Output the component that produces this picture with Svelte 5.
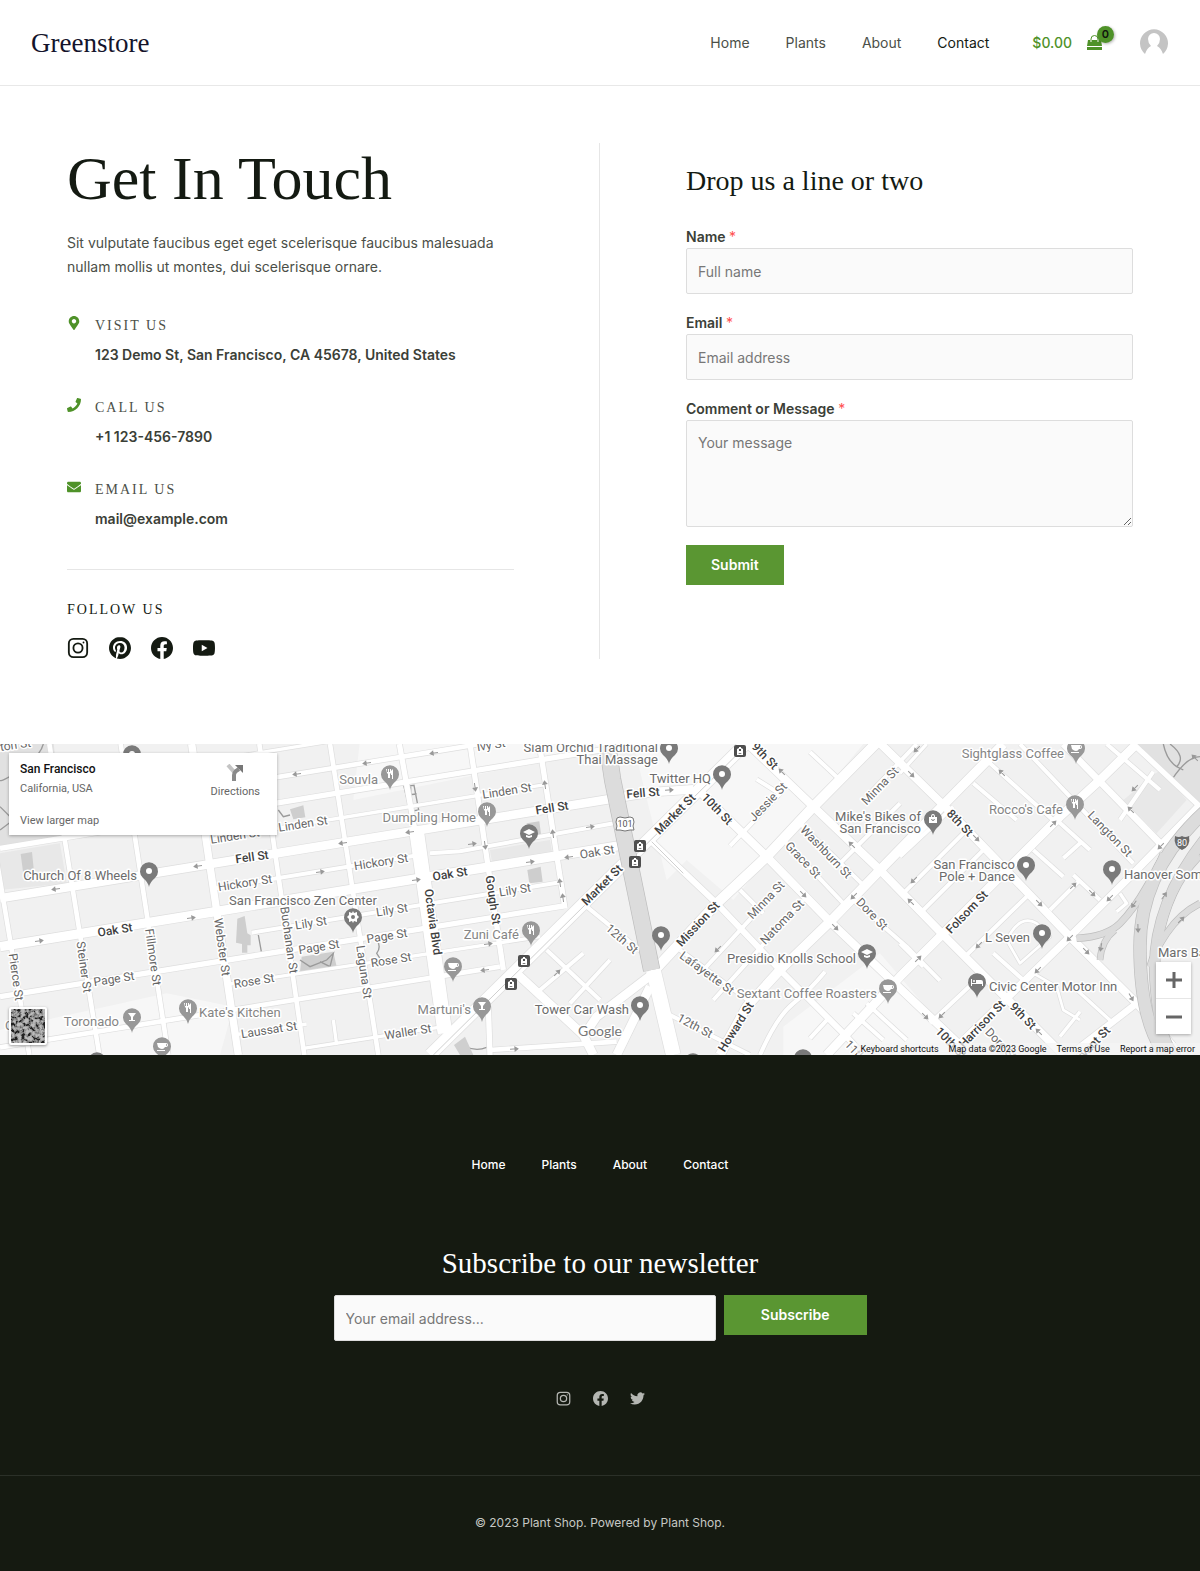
<script>
    const links = ['Home', 'Plants', 'About', 'Contact'];

    const icons = {
        facebook: 'M24 12.073c0-6.627-5.373-12-12-12s-12 5.373-12 12c0 5.99 4.388 10.954 10.125 11.854v-8.385H7.078v-3.47h3.047V9.43c0-3.007 1.792-4.669 4.533-4.669 1.312 0 2.686.235 2.686.235v2.953H15.83c-1.491 0-1.956.925-1.956 1.874v2.25h3.328l-.532 3.47h-2.796v8.385C19.612 23.027 24 18.062 24 12.073z',
        pinterest: 'M12.017 0C5.396 0 .029 5.367.029 11.987c0 5.079 3.158 9.417 7.618 11.162-.105-.949-.199-2.403.041-3.439.219-.937 1.406-5.957 1.406-5.957s-.359-.72-.359-1.781c0-1.663.967-2.911 2.168-2.911 1.024 0 1.518.769 1.518 1.688 0 1.029-.653 2.567-.992 3.992-.285 1.193.6 2.165 1.775 2.165 2.128 0 3.768-2.245 3.768-5.487 0-2.861-2.063-4.869-5.008-4.869-3.41 0-5.409 2.562-5.409 5.199 0 1.033.394 2.143.889 2.741.099.12.112.225.085.345-.09.375-.293 1.199-.334 1.363-.053.225-.172.271-.401.165-1.495-.69-2.433-2.878-2.433-4.646 0-3.776 2.748-7.252 7.92-7.252 4.158 0 7.392 2.967 7.392 6.923 0 4.135-2.607 7.462-6.233 7.462-1.214 0-2.354-.629-2.758-1.379l-.749 2.848c-.269 1.045-1.004 2.352-1.498 3.146 1.123.345 2.306.535 3.55.535 6.607 0 11.985-5.365 11.985-11.987C23.97 5.39 18.592.026 11.985.026L12.017 0z',
        youtube: 'M23.498 6.186a3.016 3.016 0 0 0-2.122-2.136C19.505 3.545 12 3.545 12 3.545s-7.505 0-9.377.505A3.017 3.017 0 0 0 .502 6.186C0 8.07 0 12 0 12s0 3.93.502 5.814a3.016 3.016 0 0 0 2.122 2.136c1.871.505 9.376.505 9.376.505s7.505 0 9.377-.505a3.015 3.015 0 0 0 2.122-2.136C24 15.93 24 12 24 12s0-3.93-.502-5.814zM9.545 15.568V8.432L15.818 12l-6.273 3.568z',
        twitter: 'M23.953 4.57a10 10 0 01-2.825.775 4.958 4.958 0 002.163-2.723c-.951.555-2.005.959-3.127 1.184a4.92 4.92 0 00-8.384 4.482C7.69 8.095 4.067 6.13 1.64 3.162a4.822 4.822 0 00-.666 2.475c0 1.71.87 3.213 2.188 4.096a4.904 4.904 0 01-2.228-.616v.06a4.923 4.923 0 003.946 4.827 4.996 4.996 0 01-2.212.085 4.936 4.936 0 004.604 3.417 9.867 9.867 0 01-6.102 2.105c-.39 0-.779-.023-1.17-.067a13.995 13.995 0 007.557 2.209c9.053 0 13.998-7.496 13.998-13.985 0-.21 0-.42-.015-.63A9.935 9.935 0 0024 4.59z',
    };

    const contacts = [
        {
            title: 'VISIT US',
            text: '123 Demo St, San Francisco, CA 45678, United States',
            box: '-64 0 512 512',
            path: 'M172.268 501.67C26.97 291.031 0 269.413 0 192 0 85.961 85.961 0 192 0s192 85.961 192 192c0 77.413-26.97 99.031-172.268 309.67-9.535 13.774-29.93 13.773-39.464 0zM192 272c44.183 0 80-35.817 80-80s-35.817-80-80-80-80 35.817-80 80 35.817 80 80 80z',
        },
        {
            title: 'CALL US',
            text: '+1 123-456-7890',
            box: '0 0 512 512',
            path: 'M493.4 24.6l-104-24c-11.3-2.6-22.9 3.3-27.5 13.9l-48 112c-4.2 9.8-1.4 21.3 6.9 28l60.6 49.6c-36 76.7-98.9 140.5-177.2 177.2l-49.6-60.6c-6.8-8.3-18.2-11.1-28-6.9l-112 48C3.9 366.5-2 378.1.6 389.4l24 104C27.1 504.2 36.7 512 48 512c256.1 0 464-207.5 464-464 0-11.2-7.7-20.9-18.6-23.4z',
        },
        {
            title: 'EMAIL US',
            text: 'mail@example.com',
            box: '0 0 512 512',
            path: 'M502.3 190.8c3.9-3.1 9.7-.2 9.7 4.7V400c0 26.5-21.5 48-48 48H48c-26.5 0-48-21.5-48-48V195.6c0-5 5.7-7.8 9.7-4.7 22.4 17.4 52.1 39.5 154.1 113.6 21.1 15.4 56.7 47.8 92.2 47.6 35.7.3 72-32.8 92.3-47.6 102-74.1 131.6-96.3 154-113.7zM256 320c23.2.4 56.6-29.2 73.4-41.4 132.7-96.3 142.8-104.7 173.4-128.7 5.8-4.5 9.2-11.5 9.2-18.9v-19c0-26.5-21.5-48-48-48H48c-26.5 0-48 21.5-48 48v19c0 7.4 3.4 14.3 9.2 18.9 30.6 23.9 40.7 32.4 173.4 128.7 16.8 12.2 50.2 41.8 73.4 41.4z',
        },
    ];

    // Roads: [width, path], on a grid three times finer than the labels
    const roads = [
        // alleys
        [10, 'M500 84L1000 2'],
        [10, 'M640 296L1640 133'],
        [12, 'M640 446L1240 348M1290 340L1380 334L1850 248'],
        [12, 'M755 578L1680 427'],
        [10, 'M690 732L1620 590'],
        [10, 'M700 885L920 852M910 925L1330 860M1000 840L1010 915'],
        [12, 'M1640 630L1800 780M1620 750L1750 640M1710 790L1830 660M1760 500L1925 635'],
        [12, 'M2000 820L2250 945M2040 630L2250 785'],
        [12, 'M2190 318L2350 150M2270 118L2345 165M2430 36L2520 120'],
        [12, 'M2110 690L2350 430M2140 780L2410 480M2220 450L2290 520'],
        [12, 'M2350 300L2530 490M2400 250L2600 445M2560 480L2720 620L2820 722'],
        [12, 'M2520 370L2560 330L2700 190M2600 170L2750 12'],
        [12, 'M2280 945Q2330 830 2380 790T2475 695M2430 895L2490 830'],
        [12, 'M2560 820L2650 900M2600 790L2720 900'],
        [12, 'M2770 510L2960 320M2715 455L2910 260M2700 350L2860 200'],
        [12, 'M2900 645L3090 460M2790 850L2950 700'],
        [12, 'M2920 130L3050 240M2970 70L3170 250M3060 12L3400 370'],
        [12, 'M3150 510L3240 420M3220 405L3300 480M3100 330L3190 410M3170 240L3270 330M3240 310L3190 355'],
        [12, 'M2980 640L3070 720M3360 240L3460 95M3320 12L3480 150M2700 610L2770 680'],
        [8, 'M3020 600Q3060 520 3110 550L3150 590L3060 670ZM3100 700L3170 740L3190 810L3240 840'],
        [10, 'M3180 890L3240 815M3220 740L3340 850M2700 100L2780 12M3360 460L3380 490L3350 515'],
        // west side
        [14, 'M500 165L1000 84L1300 35L1440 12M0 922L1500 680'],
        [16, 'M0 325L1900 14'],
        [16, 'M0 770L1690 498'],
        [14, 'M-20 300L88 945M148 12L298 945M362 12L505 945'],
        [22, 'M575 12L715 945'],
        [14, 'M778 12L913 945M990 12L1135 945'],
        [16, 'M1198 12L1250 300M1410 12L1510 690M1465 800L1470 945M1618 12L1695 505'],
        [14, 'M1470 930L1850 905'],
        [26, 'M0 475L1960 156L2080 148'],
        [28, 'M0 620L1870 315'],
        [44, 'M1250 275L1335 880'],
        [36, 'M1290 945L2240 8'],
        // south of Market
        [18, 'M1950 300L2150 490L2340 690L2540 890L2590 945'],
        [26, 'M1550 700L1750 885L1780 945M1960 700L1790 830L1750 890M1950 740L1850 945'],
        [44, 'M1960 690L2020 945'],
        [30, 'M1955 700L2150 490L2300 350L2440 200L2630 8'],
        [28, 'M2160 945L2240 800L2340 690L2490 545L2640 390L2830 195L3010 12'],
        [26, 'M2480 945L2700 710L2830 580L3010 400L3180 230L3300 120L3410 12'],
        [22, 'M2860 930L3020 775L3210 590L3400 400L3600 195'],
        [20, 'M3210 945L3410 790'],
        [24, 'M2240 8L2440 200L2640 390L2830 585L3020 775L3190 945'],
        [24, 'M2090 145L2300 350L2490 545L2700 745L2890 925'],
        [24, 'M2630 0L2830 195L3210 590L3420 800L3540 945'],
        [20, 'M3190 12L3490 320'],
        [16, 'M3400 12L3600 200'],
    ];

    const freeways = [
        [48, 'M1822 12L1838 120L1955 690'],
        [18, 'M3230 595Q3320 590 3360 550T3440 440T3490 340'],
        [16, 'M3300 660Q3305 600 3345 570'],
        [18, 'M3600 490Q3540 520 3500 580T3450 680'],
        [36, 'M3620 210Q3420 390 3420 620T3500 950'],
        [30, 'M3620 290Q3450 500 3465 720T3540 950'],
        [14, 'M3600 350Q3510 440 3480 600'],
    ];

    // x, y, angle, name, major
    const streets = [
        [14, 1, -8, 'lton St'],
        [235, 92, -9, 'Linden St'],
        [303, 80, -9, 'Linden St'],
        [252, 113, -8, 'Fell St', true],
        [245, 139, -9, 'Hickory St'],
        [115, 186, -9, 'Oak St', true],
        [114, 235, -9, 'Page St'],
        [254, 237, -9, 'Rose St'],
        [269, 286, -9, 'Laussat St'],
        [16, 233, 82, 'Pierce St'],
        [84, 223, 82, 'Steiner St'],
        [153, 213, 82, 'Fillmore St'],
        [222, 203, 82, 'Webster St'],
        [289, 196, 82, 'Buchanan St'],
        [364, 228, 82, 'Laguna St'],
        [433, 178, 82, 'Octavia Blvd', true],
        [493, 156, 82, 'Gough St', true],
        [491, 1, -9, 'Ivy St'],
        [507, 47, -9, 'Linden St'],
        [552, 64, -9, 'Fell St', true],
        [381, 118, -9, 'Hickory St'],
        [450, 130, -9, 'Oak St', true],
        [515, 146, -9, 'Lily St'],
        [392, 166, -9, 'Lily St'],
        [311, 179, -9, 'Lily St'],
        [319, 203, -9, 'Page St'],
        [387, 192, -9, 'Page St'],
        [391, 216, -9, 'Rose St'],
        [408, 288, -9, 'Waller St'],
        [597, 108, -9, 'Oak St'],
        [643, 49, -5, 'Fell St', true],
        [675, 70, -45, 'Market St', true],
        [602, 141, -45, 'Market St', true],
        [765, 12, 46, '9th St', true],
        [717, 65, 46, '10th St', true],
        [768, 58, -46, 'Jessie St'],
        [826, 108, 46, 'Washburn St'],
        [803, 116, 46, 'Grace St'],
        [880, 42, -46, 'Minna St'],
        [766, 156, -46, 'Minna St'],
        [782, 178, -46, 'Natoma St'],
        [872, 170, 46, 'Dore St'],
        [698, 180, -47, 'Mission St', true],
        [622, 195, 41, '12th St'],
        [707, 229, 36, 'Lafayette St'],
        [695, 282, 28, '12th St'],
        [736, 283, -58, 'Howard St', true],
        [860, 312, 46, '11th St'],
        [960, 79, 46, '8th St', true],
        [967, 168, -46, 'Folsom St', true],
        [1110, 90, 46, 'Langton St'],
        [982, 280, -46, 'Harrison St', true],
        [1023, 272, 46, '9th St', true],
        [951, 299, 46, '10th St', true],
        [1001, 300, 46, 'Dore St'],
        [1091, 302, -46, 'Bryant St', true],
    ];

    // x, y, anchor, lines, light
    const places = [
        [137, 131, 'end', ['Church Of 8 Wheels']],
        [119, 277, 'end', ['Toronado'], true],
        [199, 268, 'start', ["Kate's Kitchen"], true],
        [303, 156, 'middle', ['San Francisco Zen Center']],
        [378, 35, 'end', ['Souvla'], true],
        [476, 73, 'end', ['Dumpling Home'], true],
        [519, 190, 'end', ['Zuni Café'], true],
        [471, 265, 'end', ["Martuni's"], true],
        [658, 3, 'end', ['Siam Orchid Traditional', 'Thai Massage']],
        [711, 34, 'end', ['Twitter HQ']],
        [629, 265, 'end', ['Tower Car Wash']],
        [921, 72, 'end', ["Mike's Bikes of", 'San Francisco']],
        [1064, 9, 'end', ['Sightglass Coffee'], true],
        [1063, 65, 'end', ["Rocco's Cafe"], true],
        [1015, 120, 'end', ['San Francisco', 'Pole + Dance']],
        [1124, 130, 'start', ['Hanover Soma']],
        [1030, 193, 'end', ['L Seven']],
        [989, 242, 'start', ['Civic Center Motor Inn']],
        [856, 214, 'end', ['Presidio Knolls School']],
        [877, 249, 'end', ['Sextant Coffee Roasters'], true],
        [1158, 208, 'start', ['Mars Bar']],
        [5, 281, 'start', ['Cafe'], true],
    ];

    const pins = [
        [149, 127, 'dot'], [132, 10, 'dot'], [132, 273, 'drink'], [188, 264, 'food'],
        [162, 302, 'cup'], [97, 317, 'dot'], [353, 173, 'flower'], [390, 30, 'food'],
        [487, 67, 'food'], [529, 89, 'school'], [531, 186, 'food'], [453, 222, 'cup'],
        [482, 262, 'drink'], [669, 4, 'dot'], [722, 30, 'dot'], [661, 191, 'dot'],
        [640, 261, 'dot'], [933, 75, 'bag'], [1076, 4, 'cup'], [1075, 60, 'food'],
        [1026, 121, 'dot'], [1112, 125, 'dot'], [1042, 189, 'dot'], [977, 238, 'bed'],
        [867, 209, 'school'], [888, 244, 'cup'], [803, 314, 'dot'], [693, 318, 'dot'],
    ];

    const glyphs = {
        dot: 'M-3 0a3 3 0 1 0 6 0a3 3 0 1 0-6 0z',
        drink: 'M-4-4h8l-3 4v3h2v1h-6v-1h2v-3z',
        food: 'M-4-5h1v3h1v-3h1v3h1v-3h1v4l-1 1v4h-2v-4l-1-1zM3-5v10h-1v-4h-1v-4z',
        cup: 'M-5-3h9q2 0 2 2t-3 2q-1 2-3 2t-4-2zM-5 4h8v1h-8zM4-2v2q1 0 1-1t-1-1z',
        flower: 'M0-6l1 2 3-1 0 3 2 2-2 2 0 3-3-1-1 2-1-2-3 1 0-3-2-2 2-2 0-3 3 1zM-2 0a2 2 0 1 0 4 0a2 2 0 1 0-4 0z',
        school: 'M0-4l6 3-6 3-6-3zM-3 2l3 1 3-1v2l-3 1-3-1z',
        bag: 'M-4-2h2q0-3 2-3t2 3h2v6h-8zM-1-2h2q0-2-1-2t-1 2zM-2 0h1q1 2 2 0h1q-2 4-4 0z',
        bed: 'M-6-3h1v4h4v-3h5q2 0 2 2v4h-1v-2h-10v2h-1zM-4-1a1 1 0 1 0 2 0a1 1 0 1 0-2 0z',
    };

    // One way arrows: x, y, angle
    const arrows = [
        [56, 145, 172], [198, 122, 172], [191, 174, -8], [39, 197, -8], [297, 30, 172],
        [367, 19, 172], [434, 9, 172], [343, 99, 172], [410, 88, 172], [320, 128, -8],
        [416, 136, -8], [472, 100, -8], [475, 43, 82], [485, 101, 82], [545, 41, -98],
        [553, 90, -98], [560, 139, -98], [563, 154, -98], [590, 83, -8], [530, 118, -8],
        [569, 113, 172], [488, 200, -8], [485, 226, 172], [514, 305, -4], [557, 229, -45],
        [669, 46, -4], [782, 28, -135], [852, 101, -135], [803, 150, 45], [854, 152, 135],
        [835, 183, 45], [718, 205, 135], [917, 5, 135], [911, 30, 45], [1002, 29, -135],
        [976, 94, 45], [1053, 80, -45], [914, 136, 135], [911, 158, -135], [1039, 159, 45],
        [1073, 142, -45], [1092, 149, 45], [1110, 154, 135], [1070, 194, 135], [1086, 207, 45],
        [979, 201, 135], [1038, 226, 135], [918, 215, -45], [925, 272, 45], [942, 271, 135],
        [1039, 288, -135], [1131, 253, 60], [1135, 44, 135], [1131, 66, -135], [1161, 102, 135],
        [1195, 14, -135], [1134, 160, 125], [1138, 184, 88], [1164, 152, -55], [1181, 176, -45],
        [1101, 203, 100],
    ];

    const stations = [[524, 217], [511, 240], [740, 7], [640, 102], [635, 118]];
</script>

{#snippet social(name)}
    <a href="#{name}" aria-label={name}>
        <svg viewBox="0 0 24 24" aria-hidden="true">
            {#if name === 'instagram'}
                <rect x="2" y="2" width="20" height="20" rx="5" fill="none" stroke="currentColor" stroke-width="2" />
                <circle cx="12" cy="12" r="5" fill="none" stroke="currentColor" stroke-width="2" />
                <circle cx="18" cy="6" r="1" fill="currentColor" />
            {:else}
                <path d={icons[name]} fill="currentColor" />
            {/if}
        </svg>
    </a>
{/snippet}

<header>
    <a class="brand" href="#home">Greenstore</a>
    <nav class="main-nav" aria-label="Main">
        {#each links as link}
            <a href="#{link.toLowerCase()}" class:active={link === 'Contact'}>{link}</a>
        {/each}
    </nav>
    <a class="cart" href="#cart">
        <span>$0.00</span>
        <span class="bag">
            <svg viewBox="0 0 15 15" aria-hidden="true">
                <path d="M1 5h13l1 6H0zM0 12h15v3H0z" fill="currentColor" />
                <path d="M4 7V4a3 3 0 0 1 7 0v3" fill="none" stroke="#fff" stroke-width="2" />
                <path d="M4 7V4a3 3 0 0 1 7 0v3" fill="none" stroke="currentColor" stroke-width="1" />
            </svg>
            <span class="count">0</span>
        </span>
    </a>
    <a class="avatar" href="#account" aria-label="Account">
        <svg viewBox="0 0 30 30" aria-hidden="true">
            <path d="M6 26A14 14 0 1 1 24 26Q22 20 18 18Q21 15 21 11A6 6 0 0 0 9 11Q9 15 12 18Q8 20 6 26z" fill="#c4c4c4" />
        </svg>
    </a>
</header>

<main>
    <div class="contact">
        <section class="info">
            <h1>Get In Touch</h1>
            <p class="intro">Sit vulputate faucibus eget eget scelerisque faucibus malesuada nullam mollis ut montes, dui scelerisque ornare.</p>
            <ul class="details">
                {#each contacts as item}
                    <li>
                        <svg viewBox={item.box} aria-hidden="true"><path d={item.path} fill="currentColor" /></svg>
                        <div>
                            <h2>{item.title}</h2>
                            <p>{item.text}</p>
                        </div>
                    </li>
                {/each}
            </ul>
            <div class="follow">
                <h2>FOLLOW US</h2>
                <div class="social">
                    {#each ['instagram', 'pinterest', 'facebook', 'youtube'] as name}
                        {@render social(name)}
                    {/each}
                </div>
            </div>
        </section>

        <section class="message">
            <h2>Drop us a line or two</h2>
            <form onsubmit={(e) => e.preventDefault()}>
                <div class="field">
                    <label for="name">Name <span>*</span></label>
                    <input id="name" type="text" placeholder="Full name" />
                </div>
                <div class="field">
                    <label for="email">Email <span>*</span></label>
                    <input id="email" type="email" placeholder="Email address" />
                </div>
                <div class="field">
                    <label for="comment">Comment or Message <span>*</span></label>
                    <textarea id="comment" placeholder="Your message"></textarea>
                </div>
                <button class="btn" type="submit">Submit</button>
            </form>
        </section>
    </div>

    <section class="map" aria-label="Map">
        <svg class="canvas" viewBox="0 0 1200 311" preserveAspectRatio="xMidYMid slice">
            <g transform="scale(.33333) translate(0 -12)">
                <path d="M0 0H3600V960H0z" fill="#f1f1f1" />
                <path d="M1080 0H2600L2200 480L2060 360L2000 420L1900 12L1500 90L1060 180zM0 870L500 760L700 800L660 945H0zM2350 860L2640 640L2900 945H2350z" fill="#f7f7f7" />
                <path d="M0 0H160L190 290L0 320zM3400 0H3600V190L3500 110z" fill="#e1e1e1" />
                <path d="M3370 180L3480 90L3560 180L3470 280zM0 340L180 310L200 430L0 450zM1470 330L1650 300L1660 360L1480 390z" fill="#e8e8e8" />
                <path d="M62 342L96 336L102 396L70 402zM712 536L734 528L742 580L752 586V616H742V638H726V612L708 608zM1580 250L1618 244L1624 290L1584 300zM1582 390L1622 380L1628 425L1588 430zM870 208L910 196L916 232L880 238zM905 650L1000 635L1010 680L900 695z" fill="#cecece" />
                <path d="M130 12Q120 50 60 90T0 120M0 200L40 240L0 270M1212 140L1242 136L1256 210L1230 214ZM1220 165L1250 162M1232 195L1232 140M900 660L930 680L980 660L1000 640L990 680L960 665M1130 600Q1145 620 1130 640L1140 655M775 585L785 640M1395 920Q1430 935 1460 922M3490 12Q3500 60 3530 80Q3560 50 3510 12M3600 50Q3560 50 3515 120M3530 80L3550 90M835 210L850 230L870 225" fill="none" stroke="#9a9a9a" stroke-width="4" />
                {#each roads as [width, d]}
                    <path {d} fill="none" stroke="#dedede" stroke-width={width + 4} stroke-linejoin="round" />
                {/each}
                {#each roads as [width, d]}
                    <path {d} fill="none" stroke="#fff" stroke-width={width} stroke-linejoin="round" />
                {/each}
                <path d="M1300 945L2235 20M1955 305L2050 400" fill="none" stroke="#cfcfcf" stroke-width="3" />
                <path d="M1362 915L1395 890L1420 945H1380z" fill="#cfcfcf" />
                {#each freeways as [width, d]}
                    <path {d} fill="none" stroke="#bdbdbd" stroke-width={width + 4} />
                {/each}
                {#each freeways as [width, d]}
                    <path {d} fill="none" stroke="#dcdcdc" stroke-width={width} />
                {/each}
            </g>

            {#each arrows as [x, y, angle]}
                <path class="arrow" transform="translate({x} {y}) rotate({angle})" d="M-4 0H3M1-2L4 0L1 2z" />
            {/each}

            {#each streets as [x, y, angle, name, major]}
                <text class="street" class:major transform="translate({x} {y}) rotate({angle})" y="4" text-anchor="middle">{name}</text>
            {/each}

            {#each stations as [x, y]}
                <g transform="translate({x} {y})">
                    <rect x="-6" y="-6" width="12" height="12" rx="2" fill="#4f4f4f" />
                    <path d="M-3 4V-2L-1-3V-4H1V-3L3-2V4zM-1 0H1V-2H-1zM-2 3L0 2L2 3z" fill="#fff" fill-rule="evenodd" />
                </g>
            {/each}

            <g transform="translate(625 80)">
                <path d="M-8-6L-5-7L0-6L5-7L8-6L9-2L8 2L9 6L5 6L0 7L-5 6L-9 6L-8 2L-9-2z" fill="#fff" stroke="#777" />
                <text class="shield" y="3" text-anchor="middle">101</text>
            </g>
            <g transform="translate(1182 98)">
                <path d="M-7-6Q-3-4 0-6Q3-4 7-6Q9 4 0 8Q-9 4-7-6z" fill="#6b6b6b" />
                <text class="shield light" y="4" text-anchor="middle">80</text>
            </g>

            {#each pins as [x, y, kind]}
                <g transform="translate({x} {y})">
                    <path d="M0 16Q-1 11-6 7A9 9 0 1 1 6 7Q1 11 0 16z" fill={['food', 'drink', 'cup'].includes(kind) ? '#989898' : '#7a7a7a'} />
                    <path d={glyphs[kind]} fill="#fff" fill-rule="evenodd" />
                </g>
            {/each}

            {#each places as [x, y, anchor, lines, light]}
                {#each lines as line, i}
                    <text class="place" class:light {x} y={y + 5 + i * 12} text-anchor={anchor}>{line}</text>
                {/each}
            {/each}

            <text class="google" x="600" y="292" text-anchor="middle">Google</text>
        </svg>

        <div class="card">
            <div>
                <h3>San Francisco</h3>
                <p>California, USA</p>
                <a href="#map">View larger map</a>
            </div>
            <a class="directions" href="#directions">
                <svg viewBox="0 0 18 18" aria-hidden="true">
                    <path d="M2 1L9 9" stroke="#c4c4c4" stroke-width="4" />
                    <path d="M8 17V11Q8 9 10 7L13 5" fill="none" stroke="#8a8a8a" stroke-width="4" />
                    <path d="M9 1H17V9z" fill="#777" />
                </svg>
                Directions
            </a>
        </div>

        <button class="satellite" type="button" aria-label="Satellite view">
            <svg viewBox="0 0 34 34" aria-hidden="true">
                <filter id="terrain" x="0" y="0" width="100%" height="100%">
                    <feTurbulence type="fractalNoise" baseFrequency=".28" numOctaves="3" seed="4" />
                    <feColorMatrix values="3 0 0 0 -1  3 0 0 0 -1  3 0 0 0 -1  0 0 0 0 1" />
                </filter>
                <rect width="34" height="34" filter="url(#terrain)" />
                <path d="M0 0H34V34H0z" fill="#555" opacity=".4" />
            </svg>
        </button>

        <div class="zoom">
            <button type="button" aria-label="Zoom in">
                <svg viewBox="0 0 16 16" aria-hidden="true"><path d="M0 8H16M8 0V16" stroke="currentColor" stroke-width="3" /></svg>
            </button>
            <button type="button" aria-label="Zoom out">
                <svg viewBox="0 0 16 16" aria-hidden="true"><path d="M0 8H16" stroke="currentColor" stroke-width="3" /></svg>
            </button>
        </div>

        <div class="credits">
            <a href="#shortcuts">Keyboard shortcuts</a>
            <span>Map data ©2023 Google</span>
            <a href="#terms">Terms of Use</a>
            <a href="#report">Report a map error</a>
        </div>
    </section>
</main>

<footer>
    <div class="footer-top">
        <nav class="footer-nav" aria-label="Footer">
            {#each links as link}
                <a href="#{link.toLowerCase()}">{link}</a>
            {/each}
        </nav>
        <h2>Subscribe to our newsletter</h2>
        <form class="subscribe" onsubmit={(e) => e.preventDefault()}>
            <input type="email" placeholder="Your email address..." aria-label="Your email address" />
            <button class="btn" type="submit">Subscribe</button>
        </form>
        <div class="social small">
            {#each ['instagram', 'facebook', 'twitter'] as name}
                {@render social(name)}
            {/each}
        </div>
    </div>
    <p class="copyright">© 2023 Plant Shop. Powered by Plant Shop.</p>
</footer>

<style>
:global(body) {
    margin: 0;
    background: #fff;
    color: #4b4f48;
    font-family: "Inter", sans-serif;
    font-size: 14px;
    line-height: 24px;
}

h1, h2, h3, p, ul {
    margin: 0;
    padding: 0;
    font-weight: 400;
}

h1, h2, .brand {
    font-family: "Liberation Serif", serif;
    color: #141a12;
}

a {
    color: inherit;
    text-decoration: none;
}

svg {
    display: block;
}

header {
    display: flex;
    align-items: center;
    height: 85px;
    padding: 0 31px;
    border-bottom: 1px solid #e8e8e8;
}

.brand {
    margin-right: auto;
    font-size: 27px;
    color: #14142b;
}

.main-nav {
    display: flex;
    gap: 36px;
}

.main-nav .active {
    color: #141a12;
}

.cart {
    display: flex;
    align-items: center;
    gap: 15px;
    margin-left: 43px;
    color: #4f9229;
    font-weight: 500;
}

.bag {
    position: relative;
    width: 15px;
}

.count {
    position: absolute;
    top: -9px;
    left: 10px;
    width: 17px;
    border-radius: 50%;
    background: #4f9229;
    box-shadow: 1px 1px 3px rgba(0, 0, 0, 0.3);
    color: #10150d;
    font-size: 11px;
    font-weight: 600;
    line-height: 17px;
    text-align: center;
}

.avatar {
    width: 30px;
    margin-left: 37px;
}

.contact {
    display: grid;
    grid-template-columns: 1fr 1fr;
    padding: 57px 0 85px;
}

.info {
    padding: 0 85px 0 67px;
    border-right: 1px solid #e6e6e6;
}

h1 {
    font-size: 62px;
    line-height: 70px;
}

.intro {
    margin-top: 18px;
}

.details {
    display: flex;
    flex-direction: column;
    gap: 27px;
    margin-top: 34px;
    padding-bottom: 37px;
    border-bottom: 1px solid #e6e6e6;
    list-style: none;
}

.details li {
    display: flex;
    gap: 14px;
}

.details svg {
    width: 14px;
    height: 14px;
    margin-top: 3px;
    color: #4f9229;
}

.details h2, .follow h2 {
    font-size: 14px;
    line-height: 26px;
    letter-spacing: 2px;
}

.details h2 {
    color: #4b4f48;
}

.details p {
    margin-top: 3px;
    color: #3b4037;
    font-weight: 600;
    line-height: 26px;
}

.follow {
    margin-top: 27px;
}

.social {
    display: flex;
    gap: 20px;
    margin-top: 14px;
    color: #141a12;
}

.social svg {
    width: 22px;
    height: 22px;
}

.message {
    padding: 20px 67px 0 86px;
}

.message h2 {
    font-size: 28px;
    line-height: 36px;
}

.message form {
    margin-top: 27px;
}

.field {
    display: flex;
    flex-direction: column;
    margin-bottom: 18px;
}

label {
    color: #3b4037;
    font-weight: 600;
    line-height: 22px;
}

label span {
    color: #ff5050;
    font-weight: 400;
}

input, textarea {
    box-sizing: border-box;
    width: 100%;
    height: 46px;
    padding: 0 11px;
    border: 1px solid #dddddd;
    border-radius: 2px;
    background: #fafafa;
    color: #4b4f48;
    font: inherit;
}

textarea {
    height: 107px;
    padding: 10px 11px;
}

input::placeholder, textarea::placeholder {
    color: #777;
}

.btn {
    height: 40px;
    padding: 0 25px;
    border: 0;
    background: #5a9632;
    color: #fff;
    font: inherit;
    font-weight: 600;
    cursor: pointer;
}

.map {
    position: relative;
    overflow: hidden;
    font-family: "Roboto", sans-serif;
}

.canvas {
    width: 100%;
    height: 311px;
}

.canvas text {
    paint-order: stroke;
    stroke: #fff;
    stroke-width: 3px;
    stroke-linejoin: round;
}

.canvas .street {
    fill: #666;
    font-size: 12px;
}

.canvas .major {
    fill: #3f3f3f;
    font-weight: 500;
}

.canvas .place {
    fill: #6c6c6c;
    font-size: 13px;
}

.canvas .light {
    fill: #858585;
}

.canvas .shield {
    fill: #555;
    font-size: 9px;
    stroke: none;
}

.canvas .shield.light {
    fill: #fff;
}

.canvas .google {
    fill: #777;
    font-family: "Lato", sans-serif;
    font-size: 14px;
}

.arrow {
    fill: #999;
    stroke: #999;
}

.card {
    position: absolute;
    top: 9px;
    left: 9px;
    display: flex;
    justify-content: space-between;
    box-sizing: border-box;
    width: 268px;
    padding: 7px 17px 4px 11px;
    background: #fff;
    box-shadow: 0 1px 3px rgba(0, 0, 0, 0.3);
    color: #666;
    font-size: 11px;
    line-height: 20px;
}

.card h3 {
    color: #111;
    font-size: 12px;
    font-weight: 500;
    line-height: 19px;
}

.card p {
    margin-bottom: 12px;
}

.directions {
    display: flex;
    flex-direction: column;
    align-items: center;
    padding-top: 4px;
}

.directions svg {
    width: 18px;
}

.satellite {
    position: absolute;
    bottom: 10px;
    left: 9px;
    padding: 0;
    border: 2px solid #fff;
    border-radius: 2px;
    box-shadow: 0 1px 3px rgba(0, 0, 0, 0.4);
}

.satellite svg {
    width: 34px;
}

.zoom {
    position: absolute;
    right: 9px;
    bottom: 21px;
    display: flex;
    flex-direction: column;
    width: 35px;
    background: #fff;
    box-shadow: 0 1px 3px rgba(0, 0, 0, 0.3);
}

.zoom button {
    display: grid;
    place-items: center;
    height: 36px;
    padding: 0;
    border: 0;
    background: none;
    color: #666;
}

.zoom button + button {
    border-top: 1px solid #e6e6e6;
}

.zoom svg {
    width: 16px;
}

.credits {
    position: absolute;
    right: 0;
    bottom: 0;
    display: flex;
    gap: 10px;
    padding: 0 5px 0 3px;
    background: rgba(245, 245, 245, 0.7);
    color: #111;
    font-size: 9px;
    line-height: 12px;
}

footer {
    background: #151a11;
    color: #c6c8c4;
    font-size: 12px;
}

.footer-top {
    display: flex;
    flex-direction: column;
    align-items: center;
    padding: 98px 20px 69px;
    border-bottom: 1px solid #2b3028;
}

.footer-nav {
    display: flex;
    gap: 36px;
    color: #fff;
    font-weight: 500;
}

footer h2 {
    margin-top: 68px;
    color: #fff;
    font-size: 29px;
    line-height: 36px;
}

.subscribe {
    display: flex;
    align-items: flex-start;
    gap: 8px;
    width: 100%;
    max-width: 533px;
    margin-top: 14px;
    font-size: 14px;
}

.subscribe input {
    flex: 1;
    min-width: 0;
}

.subscribe .btn {
    padding: 0 37px;
}

.social.small {
    gap: 22px;
    margin-top: 50px;
    color: #b4b6b2;
}

.small svg {
    width: 15px;
    height: 15px;
}

.copyright {
    padding: 35px 20px 36px;
    text-align: center;
}
</style>
